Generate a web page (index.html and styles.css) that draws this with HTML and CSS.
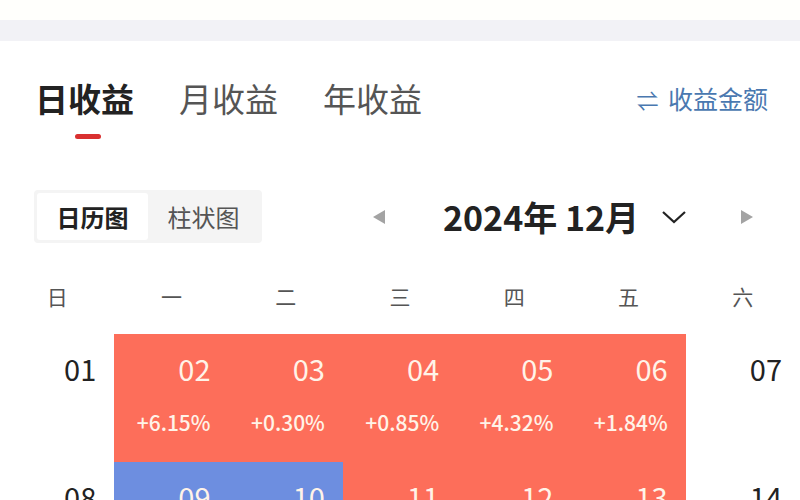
FILE: index.html
```html
<!DOCTYPE html>
<html lang="zh-CN">
<head>
<meta charset="utf-8">
<link rel="stylesheet" href="styles.css">
</head>
<body>
<div class="top-space"></div>
<div class="band"></div>
<div class="tabs-row">
  <div class="tabs">
    <div class="tab active"><span>日收益</span><i class="underline"></i></div>
    <div class="tab"><span>月收益</span></div>
    <div class="tab"><span>年收益</span></div>
  </div>
  <div class="switch"><span class="swap">⇌</span> 收益金额</div>
</div>
<div class="controls">
  <div class="segment">
    <div class="seg active">日历图</div>
    <div class="seg">柱状图</div>
  </div>
  <div class="nav">
    <svg class="tri" width="14" height="16" viewBox="0 0 14 16"><path d="M13 1 L1 8 L13 15 Z" fill="#a3a3a3"/></svg>
    <div class="month">2024年 12月</div>
    <svg class="chev" width="26" height="16" viewBox="0 0 26 16"><path d="M2 3 L13 13 L24 3" fill="none" stroke="#222" stroke-width="2.2"/></svg>
    <svg class="tri right" width="14" height="16" viewBox="0 0 14 16"><path d="M1 1 L13 8 L1 15 Z" fill="#a3a3a3"/></svg>
  </div>
</div>
<div class="week">
  <div>日</div><div>一</div><div>二</div><div>三</div><div>四</div><div>五</div><div>六</div>
</div>
<div class="cal">
  <div class="cell"><div class="num">01</div></div>
  <div class="cell up"><div class="num">02</div><div class="pct">+6.15%</div></div>
  <div class="cell up"><div class="num">03</div><div class="pct">+0.30%</div></div>
  <div class="cell up"><div class="num">04</div><div class="pct">+0.85%</div></div>
  <div class="cell up"><div class="num">05</div><div class="pct">+4.32%</div></div>
  <div class="cell up"><div class="num">06</div><div class="pct">+1.84%</div></div>
  <div class="cell"><div class="num">07</div></div>
  <div class="cell"><div class="num">08</div></div>
  <div class="cell down"><div class="num">09</div><div class="pct">-0.62%</div></div>
  <div class="cell down"><div class="num">10</div><div class="pct">-1.07%</div></div>
  <div class="cell up"><div class="num">11</div><div class="pct">+0.48%</div></div>
  <div class="cell up"><div class="num">12</div><div class="pct">+0.21%</div></div>
  <div class="cell up"><div class="num">13</div><div class="pct">+1.36%</div></div>
  <div class="cell"><div class="num">14</div></div>
</div>
</body>
</html>
```

FILE: styles.css
```css
* { box-sizing: border-box; }
html, body { margin: 0; padding: 0; background: #fff; }
body {
  width: 800px;
  height: 500px;
  overflow: hidden;
  font-family: "Noto Sans CJK SC", "Noto Sans", sans-serif;
  color: #222;
}
.top-space { height: 20px; background: #fffffc; }
.band { height: 21px; background: #f2f2f6; }

.tabs-row {
  display: flex;
  align-items: flex-start;
  justify-content: space-between;
  padding: 37px 32px 0 35px;
  height: 149px;
}
.tabs { display: flex; gap: 45px; }
.tab {
  display: flex;
  flex-direction: column;
  align-items: center;
  font-size: 33px;
  line-height: 40px;
  color: #555;
}
.tab.active { color: #222; font-weight: 700; }
.underline {
  display: block;
  width: 26px;
  height: 5px;
  border-radius: 3px;
  background: #d93030;
  margin-top: 16px;
  margin-left: 6px;
}
.switch {
  font-size: 25px;
  line-height: 40px;
  color: #4a78b0;
}
.swap { font-size: 22px; margin-right: 4px; }

.controls {
  display: flex;
  align-items: center;
  padding: 0 0 0 34px;
  height: 53px;
}
.segment {
  display: flex;
  background: #f4f4f4;
  border-radius: 4px;
  padding: 3px;
  width: 228px;
  height: 53px;
}
.seg {
  flex: 1;
  display: flex;
  align-items: center;
  justify-content: center;
  font-size: 24px;
  color: #555;
  border-radius: 3px;
}
.seg.active { background: #fff; color: #222; font-weight: 700; }

.nav {
  display: flex;
  align-items: center;
  margin-left: 110px;
}
.tri { display: block; }
.month {
  font-size: 34px;
  font-weight: 700;
  margin-left: 57px;
  line-height: 40px;
}
.chev { margin-left: 22px; display: block; }
.tri.right { margin-left: 53px; }

.week {
  display: grid;
  grid-template-columns: repeat(7, 1fr);
  margin-top: 33px;
  height: 40px;
  line-height: 40px;
  font-size: 21px;
  color: #555;
  text-align: center;
}
.cal {
  display: grid;
  grid-template-columns: repeat(7, 1fr);
  grid-auto-rows: 128px;
  margin-top: 18px;
}
.cell {
  text-align: right;
  padding: 16px 18px 0 0;
  color: #222;
}
.cell.up { background: #fd6e5a; color: #fff3e8; }
.cell.down { background: #6d8ee0; color: #fff3e8; }
.num { font-size: 29px; line-height: 36px; }
.pct { font-size: 21px; line-height: 28px; margin-top: 22px; font-weight: 500; }
```
